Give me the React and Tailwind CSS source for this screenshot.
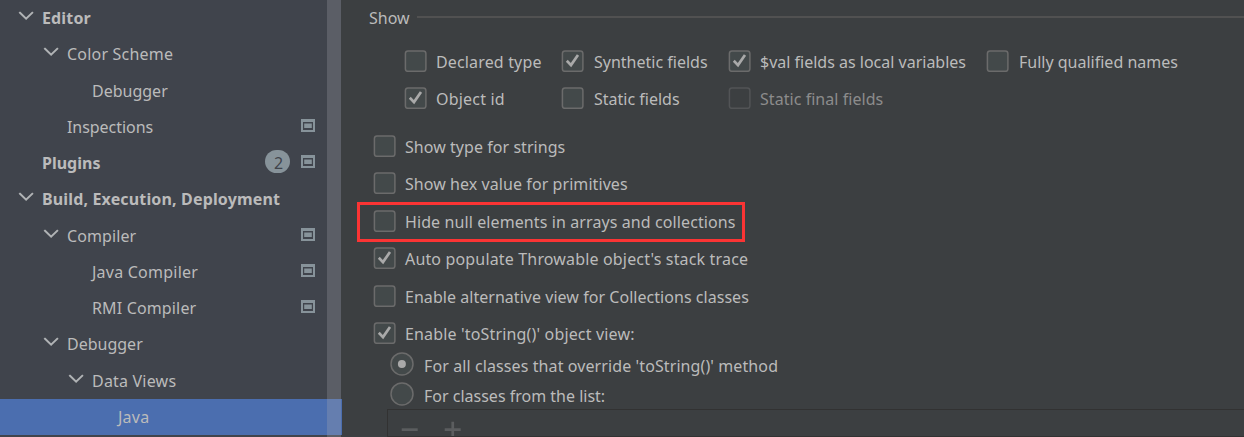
const Chevron = () => (
  <svg className="h-4 w-4 shrink-0" viewBox="0 0 16 16" fill="none">
    <path d="M2 4.8 8.1 10.7l6.1-5.9" stroke="#b0b3b5" strokeWidth="2" strokeLinecap="square" />
  </svg>
);

const ProjectIcon = () => (
  <svg className="h-[13px] w-[14px]" viewBox="0 0 14 13">
    <path fillRule="evenodd" fill="#87939a" d="M0 0h14v13H0zM2 3v8h10V3z" />
    <path fill="#87939a" d="M3.2 4.5h7.6V9H3.2z" />
  </svg>
);

const tree = [
  { label: 'Editor', pad: 'pl-[18px]', h: 'h-9', open: true, bold: true, track: 'tracking-[0.15px]' },
  { label: 'Color Scheme', pad: 'pl-[43px]', h: 'h-[37px]', open: true, track: 'tracking-[0.2px]' },
  { label: 'Debugger', pad: 'pl-[68px]', h: 'h-9' },
  { label: 'Inspections', pad: 'pl-[43px]', h: 'h-9', project: true, track: 'tracking-[-0.05px]' },
  { label: 'Plugins', pad: 'pl-[18px]', h: 'h-9', bold: true, count: 2, project: true },
  { label: 'Build, Execution, Deployment', pad: 'pl-[18px]', h: 'h-[37px]', open: true, bold: true, track: 'tracking-[0.15px]' },
  { label: 'Compiler', pad: 'pl-[43px]', h: 'h-9', open: true, project: true, track: 'tracking-[0.1px]' },
  { label: 'Java Compiler', pad: 'pl-[68px]', h: 'h-9', project: true, track: 'tracking-[0.23px]' },
  { label: 'RMI Compiler', pad: 'pl-[68px]', h: 'h-9', project: true, track: 'tracking-[0.15px]' },
  { label: 'Debugger', pad: 'pl-[43px]', h: 'h-[37px]', open: true },
  { label: 'Data Views', pad: 'pl-[68px]', h: 'h-9', open: true, track: 'tracking-[0.2px]' },
  { label: 'Java', pad: 'pl-[94px]', h: 'h-9', selected: true, track: 'tracking-[0.25px]' },
];

function TreeRow({ label, pad, h, open, bold, count, project, selected, track = '' }) {
  return (
    <div className={`flex shrink-0 items-start pr-3 ${pad} ${h} ${selected ? 'bg-[#4b6eaf]' : ''}`}>
      <span className="mt-2 h-4 w-4 shrink-0">{open && <Chevron />}</span>
      <span className={`ml-2 mt-1.5 grow leading-6 whitespace-nowrap ${track} ${bold ? 'font-bold' : ''}`}>{label}</span>
      {count && (
        <span className="mr-[11px] mt-[5px] flex h-[23px] w-[25px] items-center justify-center rounded-full bg-[#87939a] pl-0.5 pt-0.5 text-[#40444c]">
          {count}
        </span>
      )}
      {project && <span className="mt-2.5"><ProjectIcon /></span>}
    </div>
  );
}

function Check({ label, checked, disabled, gap = 'gap-[9px]', track = '', className = '' }) {
  return (
    <label className={`flex h-[22px] items-center ${gap} ${className}`}>
      <svg className="h-[22px] w-[23px] shrink-0" viewBox="0 0 23 22" fill="none">
        <rect
          x="1.4" y="1" width="20.5" height="20.3" rx="2.6"
          fill={disabled ? 'none' : '#43494a'}
          stroke={disabled ? '#525456' : '#6b6b6b'}
          strokeWidth="1.5"
        />
        {checked && <path d="M5.8 10.8 10 15.1 17 5" stroke="#a9a9a9" strokeWidth="2.7" />}
      </svg>
      <span className={`relative top-px whitespace-nowrap ${track} ${disabled ? 'text-[#8c8c8c]' : ''}`}>{label}</span>
    </label>
  );
}

function Radio({ label, checked, track = '' }) {
  return (
    <label className="flex h-6 items-center gap-[10px]">
      <svg className="h-6 w-6 shrink-0" viewBox="0 0 24 24">
        <circle cx="12" cy="11.9" r="11" fill="#43494a" stroke="#6b6b6b" strokeWidth="1.5" />
        {checked && <circle cx="11.9" cy="11.9" r="4" fill="#a9a9a9" />}
      </svg>
      <span className={`relative top-0.5 whitespace-nowrap ${track}`}>{label}</span>
    </label>
  );
}

export default function App() {
  return (
    <div className="flex h-[437px] w-[1244px] overflow-hidden bg-[#3c3f41] font-['Noto_Sans',sans-serif] text-base text-[#bbbbbb]">
      <nav className="flex w-[342px] shrink-0 flex-col">
        {tree.map((row, i) => (
          <div key={i} className="grid grid-cols-[327px_14px_1px] bg-[#40444c]">
            <TreeRow {...row} />
            <div className={row.selected ? 'bg-[#657eaf]' : 'bg-[#5b5e66]'} />
            <div className={row.selected ? 'bg-[#4b6eaf]' : 'bg-[#3c3f41]'} />
          </div>
        ))}
        <div className="grid grow grid-cols-[327px_14px_1px] bg-[#40444c]">
          <div />
          <div className="bg-[#5b5e66]" />
          <div className="bg-[#3c3f41]" />
        </div>
      </nav>
      <main className="flex grow flex-col pt-1.5">
        <div className="flex h-6 items-center gap-[7px] pl-[27px]">
          <span>Show</span>
          <div className="-mt-0.5 h-0.5 grow bg-[#515151]" />
        </div>
        <div className="mt-5 grid grid-cols-[157px_167px_258px_200px] gap-y-[15px] pl-[62px]">
          <Check label="Declared type" track="tracking-[0.15px]" />
          <Check label="Synthetic fields" checked gap="gap-[10px]" />
          <Check label="$val fields as local variables" checked />
          <Check label="Fully qualified names" gap="gap-[10px]" />
          <Check label="Object id" checked track="tracking-[0.2px]" />
          <Check label="Static fields" gap="gap-[10px]" />
          <Check label="Static final fields" disabled track="tracking-[0.05px]" />
        </div>
        <div className="mt-[26px] flex flex-col pl-[31px]">
          <Check label="Show type for strings" track="tracking-[0.05px]" />
          <Check label="Show hex value for primitives" track="tracking-[0.07px]" className="mt-[15px]" />
          <div className="-ml-4 mt-2 flex h-10 w-[388px] items-start border-[3px] border-[#fb3434] pl-[13px] pt-[5px]">
            <Check label="Hide null elements in arrays and collections" track="tracking-[0.1px]" />
          </div>
          <Check label="Auto populate Throwable object's stack trace" checked track="tracking-[0.16px]" className="mt-[5px]" />
          <Check label="Enable alternative view for Collections classes" track="tracking-[0.04px]" className="mt-4" />
          <Check label="Enable 'toString()' object view:" checked track="tracking-[0.16px]" className="mt-[15px]" />
        </div>
        <div className="mt-2 flex flex-col gap-1.5 pl-12">
          <Radio label="For all classes that override 'toString()' method" checked track="tracking-[0.1px]" />
          <Radio label="For classes from the list:" />
        </div>
        <div className="ml-[45px] mt-[3px] flex h-7 shrink-0 gap-[25px] border-y border-l border-[#323232] pl-[13px] pt-[11px]">
          <svg className="h-4 w-[18px]" viewBox="0 0 18 16"><path d="M.7 7.3h16V10H.7z" fill="#5b5d5f" /></svg>
          <svg className="h-4 w-[18px]" viewBox="0 0 18 16"><path d="M.7 7.3h6.7V.7h2.7v6.6h6.6V10h-6.6v5H7.4v-5H.7z" fill="#5b5d5f" /></svg>
        </div>
      </main>
    </div>
  );
}
